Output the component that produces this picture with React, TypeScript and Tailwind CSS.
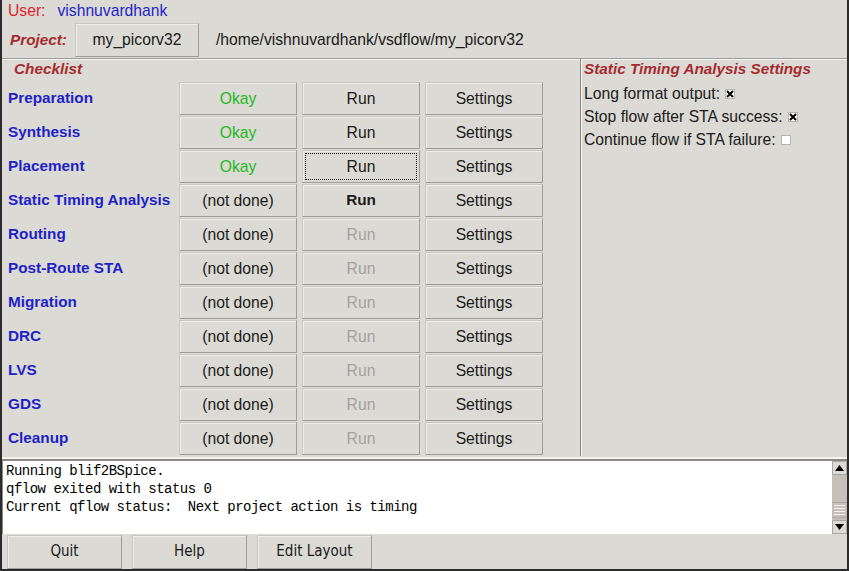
import React from 'react';

type Step = {
  name: string;
  status: 'Okay' | '(not done)';
  run: 'normal' | 'focus' | 'bold' | 'disabled';
};

const steps: Step[] = [
  { name: 'Preparation', status: 'Okay', run: 'normal' },
  { name: 'Synthesis', status: 'Okay', run: 'normal' },
  { name: 'Placement', status: 'Okay', run: 'focus' },
  { name: 'Static Timing Analysis', status: '(not done)', run: 'bold' },
  { name: 'Routing', status: '(not done)', run: 'disabled' },
  { name: 'Post-Route STA', status: '(not done)', run: 'disabled' },
  { name: 'Migration', status: '(not done)', run: 'disabled' },
  { name: 'DRC', status: '(not done)', run: 'disabled' },
  { name: 'LVS', status: '(not done)', run: 'disabled' },
  { name: 'GDS', status: '(not done)', run: 'disabled' },
  { name: 'Cleanup', status: '(not done)', run: 'disabled' },
];

function TkButton({
  children,
  className = '',
  focus = false,
}: {
  children: React.ReactNode;
  className?: string;
  focus?: boolean;
}) {
  return (
    <div
      className={`flex items-center justify-center bg-[#dcdad5] border border-[#9d9c98] border-t-[#c8c6c2] border-l-[#c8c6c2] shadow-[inset_1px_1px_0_#eeede9] ${className}`}
    >
      {focus ? (
        <div className="w-[calc(100%-4px)] h-[calc(100%-4px)] border border-dotted border-black flex items-center justify-center">
          {children}
        </div>
      ) : (
        children
      )}
    </div>
  );
}

function CheckBox({ checked }: { checked: boolean }) {
  return (
    <span className="inline-flex w-[10px] h-[10px] bg-white border border-[#b5b3ae] items-center justify-center ml-[5px]">
      {checked && (
        <svg width="8" height="8" viewBox="0 0 8 8">
          <path d="M1 1L7 7M7 1L1 7" stroke="black" strokeWidth="2" />
        </svg>
      )}
    </span>
  );
}

export default function App() {
  return (
    <div className="w-[849px] h-[571px] bg-[#dcdad5] border-l-2 border-r-2 border-b-2 border-[#2b2b2b] flex flex-col font-['Liberation_Sans',Arial,sans-serif] text-[15.7px] text-[#1a1a1a] overflow-hidden">
      {/* user */}
      <div className="h-[22px] flex items-center pl-[6px] leading-none">
        <span className="text-[#e0242a]">User:</span>
        <span className="text-[#1f1fc8] ml-[12px]">vishnuvardhank</span>
      </div>

      {/* project */}
      <div className="h-[36px] flex items-center pl-[8px]">
        <span className="text-[#a62b30] font-bold italic text-[15.3px]">Project:</span>
        <TkButton className="ml-[8px] w-[124px] h-[34px]">my_picorv32</TkButton>
        <span className="ml-[17px]">/home/vishnuvardhank/vsdflow/my_picorv32</span>
      </div>

      {/* main */}
      <div className="flex h-[398px] border-t border-t-[#9d9c98] shadow-[inset_0_1px_0_#f4f3f0]">
        {/* checklist */}
        <div className="w-[579px] flex flex-col border-r border-r-[#8a8985]">
          <div className="h-[23px] flex items-end pl-[12px] pb-[1px]">
            <span className="text-[#a62b30] font-bold italic text-[15.3px]">Checklist</span>
          </div>
          <div className="flex flex-col gap-[1px]">
            {steps.map((s) => (
              <div key={s.name} className="flex items-center h-[33px]">
                <div className="w-[177px] pl-[6px] text-[#1f1fc8] font-bold text-[15.3px]">{s.name}</div>
                <div className="flex gap-[5px]">
                  <TkButton
                    className={`w-[118px] h-[33px] ${s.status === 'Okay' ? 'text-[#22b822]' : ''}`}
                  >
                    {s.status}
                  </TkButton>
                  <TkButton
                    focus={s.run === 'focus'}
                    className={`w-[118px] h-[33px] ${
                      s.run === 'bold' ? 'font-bold text-[15.3px]' : s.run === 'disabled' ? 'text-[#a3a29e]' : ''
                    }`}
                  >
                    Run
                  </TkButton>
                  <TkButton className="w-[118px] h-[33px]">Settings</TkButton>
                </div>
              </div>
            ))}
          </div>
        </div>

        {/* settings */}
        <div className="flex-1 flex flex-col pl-[2px] border-l border-l-[#f4f3f0]">
          <div className="h-[23px] flex items-end pb-[1px]">
            <span className="text-[#a62b30] font-bold italic text-[15.3px]">Static Timing Analysis Settings</span>
          </div>
          <div className="h-[23px] flex items-center">
            Long format output:
            <CheckBox checked />
          </div>
          <div className="h-[23px] flex items-center">
            Stop flow after STA success:
            <CheckBox checked />
          </div>
          <div className="h-[23px] flex items-center">
            Continue flow if STA failure:
            <CheckBox checked={false} />
          </div>
        </div>
      </div>

      {/* console */}
      <div className="h-[77px] flex border-t-2 border-t-[#f4f3f0] mt-[1px]">
        <div className="flex-1 bg-white border-t-2 border-l border-[#8a8985] pl-[3px] pt-[1px] font-['Liberation_Mono',monospace] text-[14px] leading-[18px] text-black tracking-[-0.5px]">
          <div>Running blif2BSpice.</div>
          <div>qflow exited with status 0</div>
          <div>Current qflow status:&nbsp; Next project action is timing</div>
        </div>
        <div className="w-[15px] flex flex-col bg-[#c5c1b8] border-t-2 border-[#8a8985]">
          <div className="h-[14px] bg-[#dcdad5] border border-[#aaa8a3] flex items-center justify-center">
            <svg width="9" height="6" viewBox="0 0 9 6">
              <path d="M0 6L4.5 0L9 6Z" fill="black" />
            </svg>
          </div>
          <div className="flex-1 flex flex-col justify-end pb-[2px]">
            <div className="h-[16px] flex flex-col justify-center gap-[2px] px-[2px] border-y border-[#aaa8a3]">
              <div className="h-px bg-[#f4f3f0]" />
              <div className="h-px bg-[#f4f3f0]" />
              <div className="h-px bg-[#f4f3f0]" />
              <div className="h-px bg-[#f4f3f0]" />
            </div>
          </div>
          <div className="h-[14px] bg-[#dcdad5] border border-[#aaa8a3] flex items-center justify-center">
            <svg width="9" height="6" viewBox="0 0 9 6">
              <path d="M0 0L4.5 6L9 0Z" fill="black" />
            </svg>
          </div>
        </div>
      </div>

      {/* buttons */}
      <div className="flex-1 flex items-center gap-[10px] pl-[5px] font-['DejaVu_Sans_Condensed','Liberation_Sans_Narrow',sans-serif] [font-stretch:condensed] text-[15px]">
        <TkButton className="w-[115px] h-[34px]">Quit</TkButton>
        <TkButton className="w-[115px] h-[34px]">Help</TkButton>
        <TkButton className="w-[115px] h-[34px]">Edit Layout</TkButton>
      </div>
    </div>
  );
}
